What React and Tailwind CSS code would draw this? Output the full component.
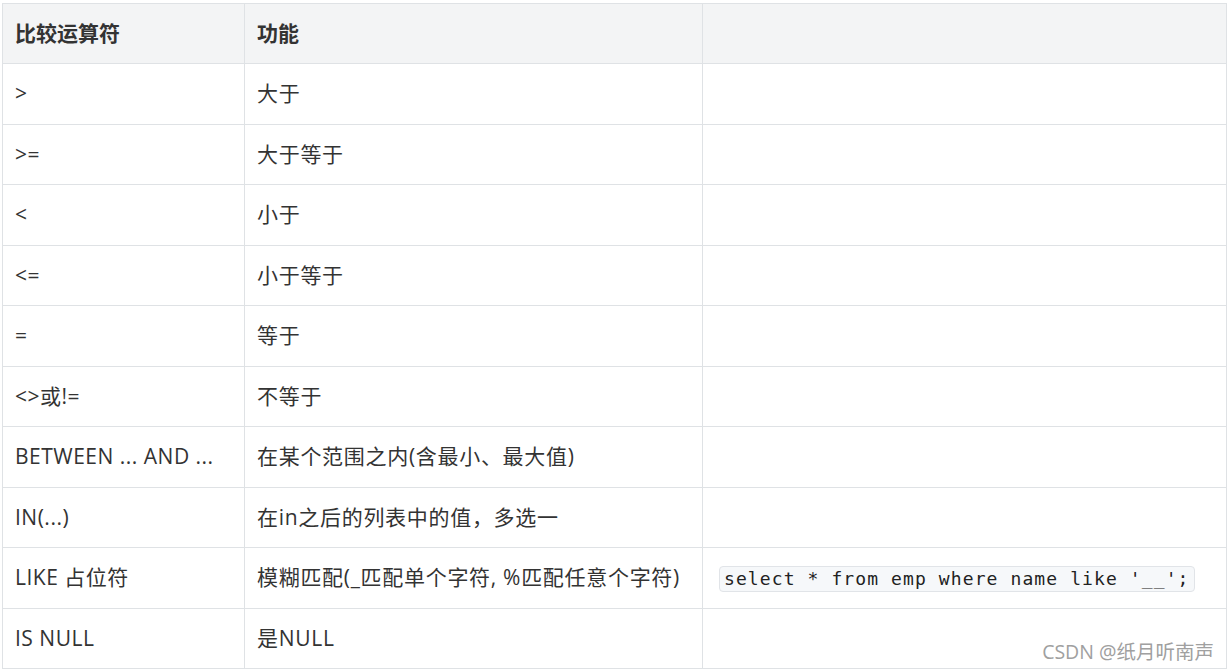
const rows = [
  ['>', '大于', null],
  ['>=', '大于等于', null],
  ['<', '小于', null],
  ['<=', '小于等于', null],
  ['=', '等于', null],
  ['<>或!=', '不等于', null],
  ['BETWEEN ... AND ...', '在某个范围之内(含最小、最大值)', null],
  ['IN(...)', '在in之后的列表中的值，多选一', null],
  ['LIKE 占位符', '模糊匹配(_匹配单个字符, %匹配任意个字符)', "select * from emp where name like '__';"],
  ['IS NULL', '是NULL', null],
];

const font = { fontFamily: '"Segoe UI", "Open Sans", "Noto Sans CJK SC", sans-serif' };

export default function App() {
  return (
    <div className="relative w-[1229px] h-[671px] bg-white overflow-hidden pl-[2px] pt-[3px]" style={font}>
      <table className="border-collapse table-fixed w-[1225px] text-[21px] text-[#333]">
        <colgroup>
          <col className="w-[242px]" />
          <col className="w-[458px]" />
          <col />
        </colgroup>
        <thead>
          <tr className="h-[60px] bg-[#f3f4f5]">
            <th className="border border-[#dfe2e5] text-left font-bold px-3">比较运算符</th>
            <th className="border border-[#dfe2e5] text-left font-bold px-3">功能</th>
            <th className="border border-[#dfe2e5]"></th>
          </tr>
        </thead>
        <tbody>
          {rows.map((r, i) => (
            <tr key={i} className="h-[60.5px]">
              <td className="border border-[#dfe2e5] px-3 whitespace-nowrap tracking-[0.5px]">{r[0]}</td>
              <td className="border border-[#dfe2e5] px-3 whitespace-nowrap tracking-[0.7px]">{r[1]}</td>
              <td className="border border-[#dfe2e5] px-4 whitespace-nowrap">
                {r[2] && (
                  <code className="inline-block align-middle bg-[#f6f8fa] border border-[#e1e4e8] rounded-[4px] px-[4px] leading-[24px] text-[18px] tracking-[1.1px] text-[#222]" style={{ fontFamily: '"DejaVu Sans Mono", monospace' }}>
                    {r[2]}
                  </code>
                )}
              </td>
            </tr>
          ))}
        </tbody>
      </table>
      <div className="absolute right-[15px] bottom-[5px] text-[19.5px] text-[#a0a0a0]">CSDN @纸月听南声</div>
    </div>
  );
}
